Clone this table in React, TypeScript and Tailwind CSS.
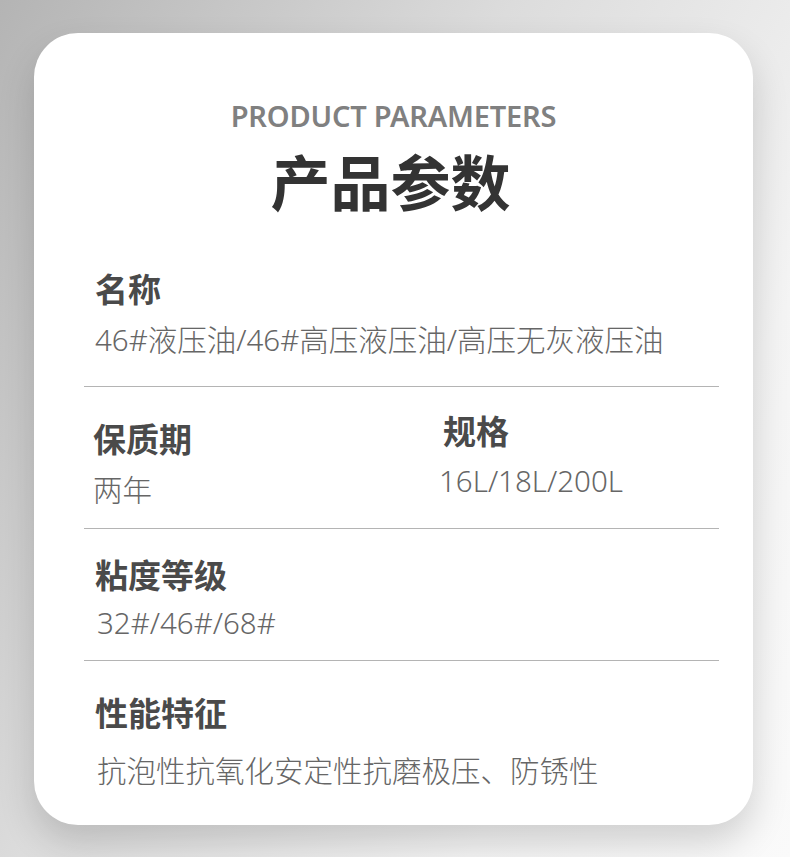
const CJK = "font-['Noto_Sans','Noto_Sans_CJK_SC',sans-serif]";

const LABEL = "text-[33px] leading-[40px] font-bold text-[#4a4a4a] " + CJK;
const VALUE = "text-[29.5px] leading-[36px] font-light text-[#666666] " + CJK;

function Divider() {
  return <div className="ml-[50px] mr-[34px] h-px bg-[#b4b4b4]" />;
}

export default function App() {
  return (
    <div className="w-[790px] h-[857px] overflow-hidden bg-[linear-gradient(120deg,#b4b4b4_0%,#dcdcdc_40%,#f4f4f4_75%,#fafafa_100%)]">
      <div className="ml-[34px] mt-[33px] w-[719px] h-[792px] rounded-[44px] bg-white shadow-[0_18px_36px_rgba(0,0,0,0.16)] pt-[65px]">
        <div className="text-center">
          <div className={"text-[29px] leading-[36px] font-semibold text-[#808080] tracking-[-0.2px] " + CJK}>PRODUCT PARAMETERS</div>
          <div className={"mt-[14px] pr-[6px] text-[60px] leading-[70px] font-bold text-[#333333] " + CJK}>产品参数</div>
        </div>

        <div className="mt-[52px] px-[61px] pb-[28px]">
          <div className={LABEL}>名称</div>
          <div className={"mt-[12px] " + VALUE}>46#液压油/46#高压液压油/高压无灰液压油</div>
        </div>
        <Divider />

        <div className="flex pt-[25px] pb-[20px]">
          <div className="w-[400px] pl-[59px]">
            <div className={"mt-[8px] " + LABEL}>保质期</div>
            <div className={"mt-[12px] " + VALUE}>两年</div>
          </div>
          <div>
            <div className={"ml-[9px] " + LABEL}>规格</div>
            <div className={"ml-[5px] mt-[11px] " + VALUE}>16L/18L/200L</div>
          </div>
        </div>
        <Divider />

        <div className="px-[61px] pt-[27px] pb-[19px]">
          <div className={LABEL}>粘度等级</div>
          <div className={"mt-[9px] ml-[2px] " + VALUE}>32#/46#/68#</div>
        </div>
        <Divider />

        <div className="px-[61px] pt-[33px]">
          <div className={LABEL}>性能特征</div>
          <div className={"mt-[19px] ml-[2px] " + VALUE}>抗泡性抗氧化安定性抗磨极压、防锈性</div>
        </div>
      </div>
    </div>
  );
}
